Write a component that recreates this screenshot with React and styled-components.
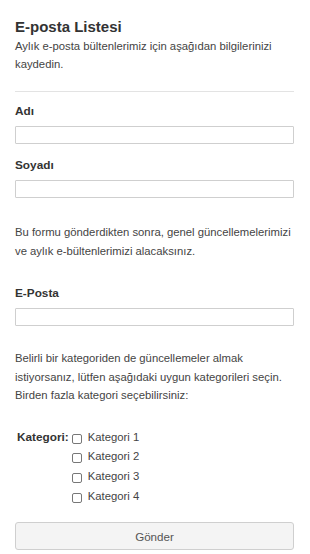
import React from "react";
import styled, { createGlobalStyle } from "styled-components";

const GlobalStyle = createGlobalStyle`
	body {
		margin: 0;
		background: #fff;
		font-family: "Liberation Sans", Arial, sans-serif;
		color: #444;
	}
`;

const categories = ["Kategori 1", "Kategori 2", "Kategori 3", "Kategori 4"];

export default function App() {
	return (
		<>
			<GlobalStyle />
			<StyledForm onSubmit={e => e.preventDefault()}>
				<header>
					<h2>E-posta Listesi</h2>
					<p>Aylık e-posta bültenlerimiz için aşağıdan bilgilerinizi kaydedin.</p>
				</header>

				<Divider />

				<Field>
					<Label htmlFor="ad">Adı</Label>
					<TextInput id="ad" type="text" />
				</Field>
				<Field $gap={12}>
					<Label htmlFor="soyad">Soyadı</Label>
					<TextInput id="soyad" type="text" />
				</Field>

				<Note $top={25}>
					Bu formu gönderdikten sonra, genel güncellemelerimizi ve aylık e-bültenlerimizi
					alacaksınız.
				</Note>

				<Field $gap={24}>
					<Label htmlFor="eposta">E-Posta</Label>
					<TextInput id="eposta" type="email" />
				</Field>

				<Note $top={23}>
					Belirli bir kategoriden de güncellemeler almak istiyorsanız, lütfen aşağıdaki uygun
					kategorileri seçin. Birden fazla kategori seçebilirsiniz:
				</Note>

				<CategoryRow>
					<Label as="span">Kategori:</Label>
					<CategoryList>
						{categories.map(cat => (
							<CheckItem key={cat}>
								<Box type="checkbox" />
								<span>{cat}</span>
							</CheckItem>
						))}
					</CategoryList>
				</CategoryRow>

				<SubmitButton type="submit">Gönder</SubmitButton>
			</StyledForm>
		</>
	);
}

const StyledForm = styled.form`
	width: 310px;
	box-sizing: border-box;
	padding: 17px 16px 6px 15px;
	display: flex;
	flex-direction: column;
	font-size: 11.3px;
	line-height: 18px;

	h2 {
		margin: 0;
		font-size: 15px;
		line-height: 20px;
		font-weight: bold;
		color: #333;
	}
	header p {
		margin: 0;
		color: #444;
	}
`;

const Divider = styled.hr`
	width: 100%;
	margin: 18px 0 10px;
	border: 0;
	border-top: 1px solid #e3e3e3;
`;

const Field = styled.div`
	display: flex;
	flex-direction: column;
	gap: 6px;
	margin-top: ${p => p.$gap || 0}px;
`;

const Label = styled.label`
	font-weight: bold;
	font-size: 11.8px;
	line-height: 18px;
	color: #333;
`;

const TextInput = styled.input`
	box-sizing: border-box;
	width: 100%;
	height: 18px;
	margin: 0;
	padding: 0 4px;
	border: 1px solid #cfcfcf;
	border-radius: 1px;
	background: #fff;
	font: inherit;
	outline: none;
`;

const Note = styled.p`
	margin: ${p => p.$top}px -1px 0 0;
	color: #444;
	line-height: 18.5px;
`;

const CategoryRow = styled.div`
	display: flex;
	align-items: flex-start;
	gap: 3px;
	margin-top: 23px;
	padding-left: 2px;
`;

const CategoryList = styled.div`
	display: flex;
	flex-direction: column;
`;

const CheckItem = styled.label`
	display: flex;
	align-items: flex-start;
	gap: 6px;
	height: 19.7px;
	color: #444;
	line-height: 18px;
`;

const Box = styled.input`
	appearance: none;
	box-sizing: border-box;
	width: 10px;
	height: 10px;
	margin: 6px 0 0;
	border: 1px solid #777;
	border-radius: 2px;
	background: #fff;
`;

const SubmitButton = styled.button`
	margin-top: 16px;
	width: 100%;
	height: 28px;
	box-sizing: border-box;
	border: 1px solid #cfcfcf;
	border-radius: 3px;
	background: #f4f4f4;
	color: #555;
	font-family: inherit;
	font-size: 11.6px;
	cursor: pointer;
`;
